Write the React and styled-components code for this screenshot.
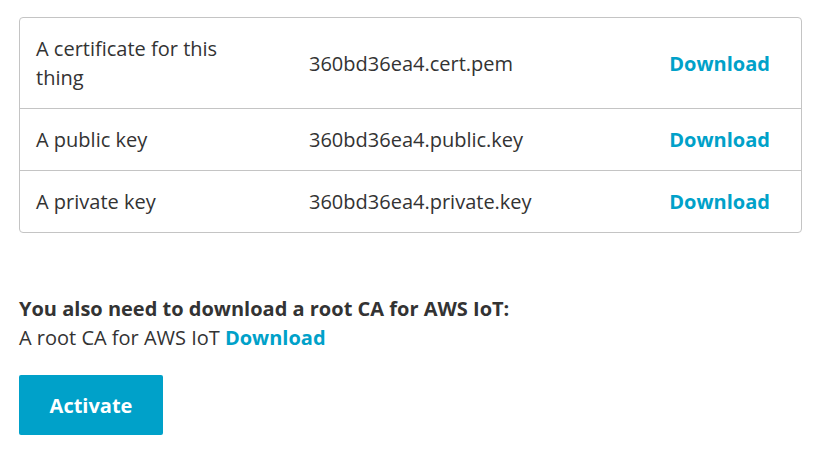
import React from "react";
import styled, { createGlobalStyle } from "styled-components";

const Global = createGlobalStyle`
  html, body { margin: 0; padding: 0; background: #fff; }
  body { font-family: "Open Sans", "Noto Sans", sans-serif; color: #333; }
`;

const Page = styled.div`
  padding: 17px 28px 0 19px;
  font-size: 20px;
  line-height: 29px;
`;

const Table = styled.div`
  border: 1px solid #c4c4c4;
  border-radius: 4px;
  display: grid;
  grid-template-columns: 273px 1fr auto;
`;

const Cell = styled.div`
  padding: 16px 16px;
  display: flex;
  align-items: center;
  border-top: ${(p) => (p.$first ? "none" : "1px solid #c4c4c4")};
  padding-right: ${(p) => p.$pr || "16px"};
`;

const Link = styled.a`
  color: #00a1c9;
  font-weight: 700;
  text-decoration: none;
  cursor: pointer;
  margin-left: ${(p) => p.$gap || "0"};
`;

const Heading = styled.div`
  margin-top: 61px;
  font-weight: 700;
`;

const Line = styled.div``;

const Button = styled.button`
  margin-top: 23px;
  width: 144px;
  height: 60px;
  border: none;
  border-radius: 2px;
  background: #00a1c9;
  color: #fff;
  font-family: inherit;
  font-size: 20px;
  font-weight: 700;
  cursor: pointer;
`;

const rows = [
  ["A certificate for this thing", "360bd36ea4.cert.pem"],
  ["A public key", "360bd36ea4.public.key"],
  ["A private key", "360bd36ea4.private.key"],
];

export default function App() {
  return (
    <>
      <Global />
      <Page>
        <Table>
          {rows.map(([label, file], i) => (
            <React.Fragment key={file}>
              <Cell $first={i === 0} $pr="40px">{label}</Cell>
              <Cell $first={i === 0}>{file}</Cell>
              <Cell $first={i === 0} $pr="31px">
                <Link>Download</Link>
              </Cell>
            </React.Fragment>
          ))}
        </Table>
        <Heading>You also need to download a root CA for AWS IoT:</Heading>
        <Line>
          A root CA for AWS IoT<Link $gap="5px">Download</Link>
        </Line>
        <Button>Activate</Button>
      </Page>
    </>
  );
}
